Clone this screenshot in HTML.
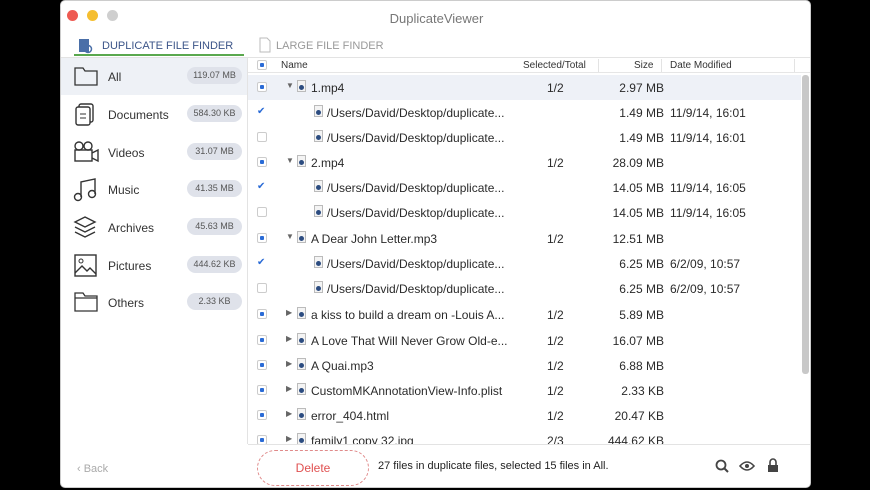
<!DOCTYPE html>
<html><head><meta charset="utf-8"><style>
*{margin:0;padding:0;box-sizing:border-box}
body{width:870px;height:490px;background:#000;position:relative;overflow:hidden;font-family:"Liberation Sans",sans-serif;color:#333}
.win{position:absolute;left:60px;top:0;width:751px;height:488px;background:#fff;border-radius:5px;overflow:hidden;border:1px solid #ccc}
.a{position:absolute}
.dot{width:11px;height:11px;border-radius:50%;top:9px}
.side{left:0;top:57px;width:187px;height:386px;background:#fff;border-right:1px solid #e3e3e3}
.item{position:absolute;left:0;width:186px;height:37px}
.item .lab{position:absolute;left:47px;top:12px;font-size:12px;color:#333}
.item .b{position:absolute;left:126px;top:9px;width:55px;height:17px;border-radius:9px;background:#dfe2ea;font-size:9px;color:#555;text-align:center;line-height:17px}
.item svg{position:absolute;left:12px;top:6px}
.row{position:absolute;left:187px;width:553px;height:25px;font-size:12px;color:#2a2a2a}
.row span{position:absolute;top:6px;white-space:nowrap}
.cb{position:absolute;left:9px;top:7px;width:10px;height:10px;border:1px solid #ccc;border-radius:2px;background:#fff}
.cb.m::after{content:"";position:absolute;left:2px;top:2px;width:4px;height:4px;background:#2a6bd6;border-radius:1px}
.cb.c{border:none}
.cb.c::after{content:"✔";position:absolute;left:0;top:-1px;font-size:10px;color:#2a6bd6}
.fi{position:absolute;top:5px;width:9px;height:12px;border:1px solid #bbb;background:#f4f4f4}
.fi::after{content:"";position:absolute;left:1px;top:4px;width:5px;height:5px;border-radius:50%;background:#2c4c80}
.tri{position:absolute;top:7px;font-size:8px;color:#666}
.hd{font-size:10px;color:#333;top:59px}
</style></head><body>
<div class="win">
<div class="a dot" style="left:6px;background:#ee5a52"></div>
<div class="a dot" style="left:26px;background:#f5be30"></div>
<div class="a dot" style="left:46px;background:#cfcfcf"></div>
<div class="a" style="left:0;width:751px;top:10px;text-align:center;font-size:13px;color:#777">DuplicateViewer</div>
<svg class="a" style="left:17px;top:37px" width="16" height="16"><rect x="1" y="1" width="10" height="13" fill="#4a6fa8"/><circle cx="10" cy="11" r="3.5" fill="none" stroke="#4a6fa8" stroke-width="1.5"/></svg>
<div class="a" style="left:41px;top:39px;font-size:11px;color:#3b5488">DUPLICATE FILE FINDER</div>
<div class="a" style="left:13px;top:53px;width:170px;height:2px;background:#5aa84e"></div>
<svg class="a" style="left:198px;top:36px" width="12" height="16"><path d="M1 1h7l3 3v11H1z" fill="none" stroke="#bbb"/></svg>
<div class="a" style="left:215px;top:39px;font-size:11px;color:#999">LARGE FILE FINDER</div>
<div class="a" style="left:0;top:56px;width:751px;height:1px;background:#e3e3e3"></div>
<div class="a side">
 <div class="item" style="top:0;background:#eef1f6"><svg width="26" height="24"><path d="M2 4h8l2 3h12v14H2z" fill="none" stroke="#333" stroke-width="1.3"/></svg><span class="lab">All</span><span class="b">119.07 MB</span></div>
 <div class="item" style="top:38px"><svg width="26" height="26"><rect x="6" y="2" width="14" height="18" rx="2" fill="none" stroke="#333" stroke-width="1.4"/><rect x="3" y="5" width="14" height="18" rx="2" fill="#fff" stroke="#333" stroke-width="1.4"/><path d="M7 12h6M7 16h6" stroke="#333"/></svg><span class="lab">Documents</span><span class="b">584.30 KB</span></div>
 <div class="item" style="top:76px"><svg width="28" height="24"><circle cx="6" cy="6" r="4" fill="none" stroke="#333" stroke-width="1.4"/><circle cx="15" cy="6" r="4" fill="none" stroke="#333" stroke-width="1.4"/><rect x="2" y="10" width="17" height="11" fill="none" stroke="#333" stroke-width="1.4"/><path d="M19 13l6-3v11l-6-3" fill="none" stroke="#333" stroke-width="1.4"/></svg><span class="lab">Videos</span><span class="b">31.07 MB</span></div>
 <div class="item" style="top:113px"><svg width="26" height="26"><path d="M8 20V5l14-3v15" fill="none" stroke="#333" stroke-width="1.4"/><circle cx="5" cy="20" r="3.5" fill="none" stroke="#333" stroke-width="1.4"/><circle cx="19" cy="17" r="3.5" fill="none" stroke="#333" stroke-width="1.4"/></svg><span class="lab">Music</span><span class="b">41.35 MB</span></div>
 <div class="item" style="top:151px"><svg width="26" height="24"><path d="M12 2l10 5-10 5-10-5z M2 12l10 5 10-5 M2 17l10 5 10-5" fill="none" stroke="#333" stroke-width="1.4"/></svg><span class="lab">Archives</span><span class="b">45.63 MB</span></div>
 <div class="item" style="top:189px"><svg width="26" height="26"><rect x="2" y="2" width="21" height="21" fill="none" stroke="#333" stroke-width="1.4"/><circle cx="8" cy="8" r="2" fill="none" stroke="#333"/><path d="M2 20l7-7 5 5 3-3 6 6" fill="none" stroke="#333" stroke-width="1.4"/></svg><span class="lab">Pictures</span><span class="b">444.62 KB</span></div>
 <div class="item" style="top:226px"><svg width="26" height="24"><path d="M2 3h8l2 3h12v15H2z M2 8h22" fill="none" stroke="#333" stroke-width="1.3"/></svg><span class="lab">Others</span><span class="b">2.33 KB</span></div>
</div>
<div class="a" style="left:16px;top:462px;font-size:11px;color:#aaa">‹ Back</div>
<div class="a" style="left:187px;top:56px;width:564px;height:16px;border-bottom:1px solid #e6e6e6"></div>
<div class="cb m a" style="left:196px;top:59px"></div>
<div class="a hd" style="left:220px">Name</div>
<div class="a hd" style="left:462px">Selected/Total</div>
<div class="a hd" style="left:573px">Size</div>
<div class="a hd" style="left:609px">Date Modified</div>
<div class="a" style="left:537px;top:58px;width:1px;height:13px;background:#e3e3e3"></div>
<div class="a" style="left:600px;top:58px;width:1px;height:13px;background:#e3e3e3"></div>
<div class="a" style="left:733px;top:58px;width:1px;height:13px;background:#e3e3e3"></div>

<div class="row" style="top:74px;background:#eef1f7"><div class="cb m"></div><span class="tri" style="left:38px">▼</span><div class="fi" style="left:49px"></div><span style="left:63px">1.mp4</span><span style="left:299px">1/2</span><span style="right:137px">2.97 MB</span></div>
<div class="row" style="top:99px"><div class="cb c"></div><div class="fi" style="left:66px"></div><span style="left:79px">/Users/David/Desktop/duplicate...</span><span style="right:137px">1.49 MB</span><span style="left:422px">11/9/14, 16:01</span></div>
<div class="row" style="top:124px"><div class="cb"></div><div class="fi" style="left:66px"></div><span style="left:79px">/Users/David/Desktop/duplicate...</span><span style="right:137px">1.49 MB</span><span style="left:422px">11/9/14, 16:01</span></div>
<div class="row" style="top:149px"><div class="cb m"></div><span class="tri" style="left:38px">▼</span><div class="fi" style="left:49px"></div><span style="left:63px">2.mp4</span><span style="left:299px">1/2</span><span style="right:137px">28.09 MB</span></div>
<div class="row" style="top:174px"><div class="cb c"></div><div class="fi" style="left:66px"></div><span style="left:79px">/Users/David/Desktop/duplicate...</span><span style="right:137px">14.05 MB</span><span style="left:422px">11/9/14, 16:05</span></div>
<div class="row" style="top:199px"><div class="cb"></div><div class="fi" style="left:66px"></div><span style="left:79px">/Users/David/Desktop/duplicate...</span><span style="right:137px">14.05 MB</span><span style="left:422px">11/9/14, 16:05</span></div>
<div class="row" style="top:225px"><div class="cb m"></div><span class="tri" style="left:38px">▼</span><div class="fi" style="left:49px"></div><span style="left:63px">A Dear John Letter.mp3</span><span style="left:299px">1/2</span><span style="right:137px">12.51 MB</span></div>
<div class="row" style="top:250px"><div class="cb c"></div><div class="fi" style="left:66px"></div><span style="left:79px">/Users/David/Desktop/duplicate...</span><span style="right:137px">6.25 MB</span><span style="left:422px">6/2/09, 10:57</span></div>
<div class="row" style="top:275px"><div class="cb"></div><div class="fi" style="left:66px"></div><span style="left:79px">/Users/David/Desktop/duplicate...</span><span style="right:137px">6.25 MB</span><span style="left:422px">6/2/09, 10:57</span></div>
<div class="row" style="top:301px"><div class="cb m"></div><span class="tri" style="left:38px">▶</span><div class="fi" style="left:49px"></div><span style="left:63px">a kiss to build a dream on -Louis A...</span><span style="left:299px">1/2</span><span style="right:137px">5.89 MB</span></div>
<div class="row" style="top:327px"><div class="cb m"></div><span class="tri" style="left:38px">▶</span><div class="fi" style="left:49px"></div><span style="left:63px">A Love That Will Never Grow Old-e...</span><span style="left:299px">1/2</span><span style="right:137px">16.07 MB</span></div>
<div class="row" style="top:352px"><div class="cb m"></div><span class="tri" style="left:38px">▶</span><div class="fi" style="left:49px"></div><span style="left:63px">A Quai.mp3</span><span style="left:299px">1/2</span><span style="right:137px">6.88 MB</span></div>
<div class="row" style="top:377px"><div class="cb m"></div><span class="tri" style="left:38px">▶</span><div class="fi" style="left:49px"></div><span style="left:63px">CustomMKAnnotationView-Info.plist</span><span style="left:299px">1/2</span><span style="right:137px">2.33 KB</span></div>
<div class="row" style="top:402px"><div class="cb m"></div><span class="tri" style="left:38px">▶</span><div class="fi" style="left:49px"></div><span style="left:63px">error_404.html</span><span style="left:299px">1/2</span><span style="right:137px">20.47 KB</span></div>
<div class="row" style="top:427px;height:16px;overflow:hidden"><div class="cb m"></div><span class="tri" style="left:38px">▶</span><div class="fi" style="left:49px"></div><span style="left:63px">family1 copy 32.jpg</span><span style="left:299px">2/3</span><span style="right:137px">444.62 KB</span></div>
<div class="a" style="left:741px;top:74px;width:7px;height:299px;background:#c8c8c8;border-radius:3px"></div>

<div class="a" style="left:187px;top:443px;width:564px;height:45px;background:#fff;border-top:1px solid #e3e3e3"></div>
<div class="a" style="left:196px;top:449px;width:112px;height:36px;border:1px dashed #e08a8a;border-radius:18px;text-align:center;line-height:34px;font-size:12px;color:#e05050">Delete</div>
<div class="a" style="left:317px;top:459px;font-size:11px;color:#222">27 files in duplicate files, selected 15 files in All.</div>
<svg class="a" style="left:654px;top:458px" width="14" height="14"><circle cx="6" cy="6" r="4.5" fill="none" stroke="#444" stroke-width="1.8"/><path d="M9.5 9.5l3.5 3.5" stroke="#444" stroke-width="2"/></svg>
<svg class="a" style="left:678px;top:459px" width="16" height="12"><path d="M1 6q7-8 14 0q-7 8-14 0z" fill="none" stroke="#444" stroke-width="1.6"/><circle cx="8" cy="6" r="2" fill="#444"/></svg>
<svg class="a" style="left:706px;top:457px" width="12" height="15"><path d="M3 7V4a3 3 0 016 0v3" fill="none" stroke="#444" stroke-width="1.6"/><rect x="1" y="7" width="10" height="7" fill="#444"/></svg>
</div>
</body></html>
